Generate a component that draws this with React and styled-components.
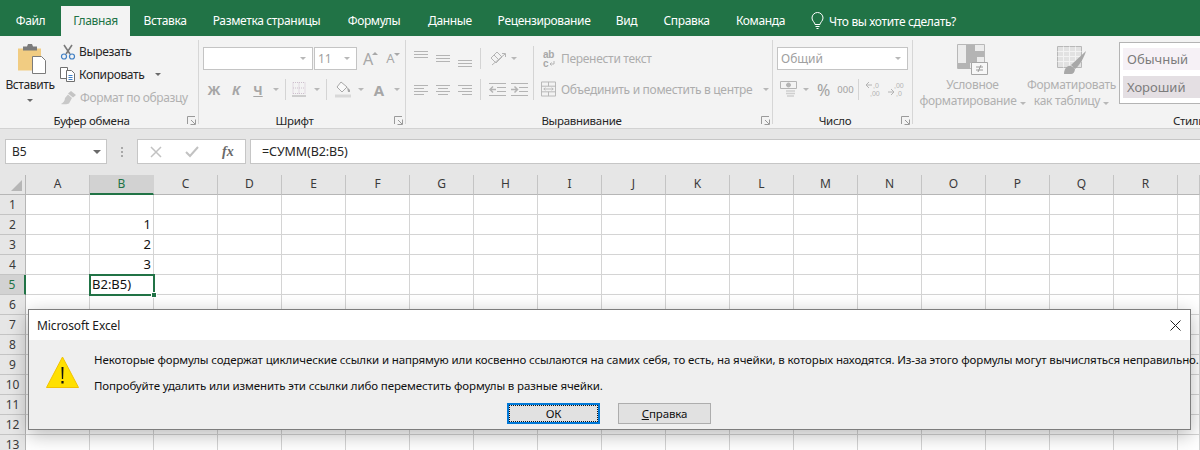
import React from 'react';
import styled, { createGlobalStyle } from 'styled-components';

const Global = createGlobalStyle`
    html, body {
        margin: 0;
        padding: 0;
        background: #fff;
    }
    body {
        font-family: "Noto Sans", "Open Sans", sans-serif;
        font-size: 12px;
        color: #262626;
    }
`
const Page = styled.div`
    width: 1200px;
    height: 450px;
    position: relative;
    overflow: hidden;
    display: flex;
    flex-direction: column;
`
const TabBar = styled.div`
    height: 36px;
    flex: none;
    display: flex;
    align-items: flex-end;
    background: #217346;
`
const Tab = styled.div`
    width: ${p => p.$w}px;
    height: ${p => p.$active ? 30 : 36}px;
    line-height: ${p => p.$active ? 30 : 42}px;
    text-align: center;
    font-size: 12px;
    letter-spacing: -0.35px;
    color: ${p => p.$active ? '#217346' : '#fff'};
    background: ${p => p.$active ? '#f3f3f3' : 'transparent'};
`
const Search = styled.div`
    display: flex;
    align-items: center;
    gap: 5px;
    height: 36px;
    padding: 6px 0 0 13px;
    box-sizing: border-box;
    color: #fff;
    font-size: 12px;
    letter-spacing: -0.35px;
`
const Ribbon = styled.div`
    height: 92px;
    flex: none;
    display: flex;
    background: #f3f3f3;
    border-bottom: 1px solid #d2d2d2;
`
const Group = styled.div`
    width: ${p => p.$w}px;
    flex: none;
    margin-top: 4px;
    box-sizing: border-box;
    background: linear-gradient(#d6d6d6, #d6d6d6) right top / 1px calc(100% - 4px) no-repeat;
    display: flex;
    flex-direction: column;
`
const GroupBody = styled.div`
    flex: 1;
    display: flex;
    min-height: 0;
`
const GroupLabel = styled.div`
    height: 16px;
    flex: none;
    display: flex;
    align-items: center;
    font-size: 11.5px;
    letter-spacing: -0.3px;
    color: #262626;
`
const LabelText = styled.span`
    flex: 1;
    text-align: center;
    white-space: nowrap;
`
const Launcher = styled.svg`
    flex: none;
    margin: 0 3px 0 4px;
    width: 9px;
    height: 9px;
`
const PasteCol = styled.div`
    width: 60px;
    flex: none;
    display: flex;
    flex-direction: column;
    align-items: center;
    padding-top: 3px;
    line-height: 16px;
    letter-spacing: -0.4px;
`
const PasteIconWrap = styled.div`
    height: 31px;
    margin-left: 3px;
`
const PasteLabel = styled.div`
    margin-top: 3px;
`
const ClipList = styled.div`
    display: flex;
    flex-direction: column;
`
const ClipRow = styled.div`
    height: 23px;
    display: flex;
    align-items: center;
    gap: 3px;
    letter-spacing: -0.35px;
    white-space: nowrap;
    color: ${p => p.$off ? '#b1b1b1' : '#262626'};
`
const Caret = styled.span`
    display: inline-block;
    flex: none;
    width: 0;
    height: 0;
    margin-left: ${p => p.$ml || 0}px;
    margin-top: ${p => p.$mt || 0}px;
    border-left: 3px solid transparent;
    border-right: 3px solid transparent;
    border-top: 3px solid ${p => p.$dark ? '#6a6a6a' : '#b8b8b8'};
`
const NameCaret = styled(Caret)`
    border-left-width: 4px;
    border-right-width: 4px;
    border-top-width: 4px;
`
const Stack = styled.div`
    display: flex;
    flex-direction: column;
    padding: 7px 0 0 4px;
    gap: 8px;
`
const Row = styled.div`
    display: flex;
    align-items: center;
    height: 23px;
`
const Combo = styled.div`
    width: ${p => p.$w}px;
    height: 23px;
    box-sizing: border-box;
    border: 1px solid #c4c4c4;
    background: #fff;
    display: flex;
    align-items: center;
    justify-content: space-between;
    padding: 0 6px 0 3px;
    margin-right: ${p => p.$mr || 0}px;
    color: #a0a0a0;
    font-size: 12px;
`
const GrowA = styled.span`
    font-size: ${p => p.$s}px;
    color: #a8a8a8;
    margin-left: ${p => p.$ml}px;
    line-height: 1;
    position: relative;
    &::after {
        content: '';
        position: absolute;
        top: 1px;
        right: -5px;
        border-left: 3px solid transparent;
        border-right: 3px solid transparent;
        ${p => p.$down ? 'border-top' : 'border-bottom'}: 3px solid #a8a8a8;
    }
`
const FontBtn = styled.span`
    width: ${p => p.$w || 22}px;
    text-align: center;
    font-weight: 700;
    font-size: ${p => p.$fs || 13}px;
    color: #a6a6a6;
    font-style: ${p => p.$i ? 'italic' : 'normal'};
    text-decoration: ${p => p.$u ? 'underline' : 'none'};
`
const VLine = styled.span`
    width: 1px;
    height: 21px;
    flex: none;
    background: #d4d4d4;
    margin-left: ${p => p.$m || 6}px;
    margin-right: ${p => p.$mr || p.$m || 6}px;
`
const Gap = styled.span`
    width: ${p => p.$w}px;
    flex: none;
`
const AlignCols = styled.div`
    display: flex;
    flex-direction: column;
    width: 127px;
    padding: 8px 0 0 8px;
    flex: none;
    box-sizing: border-box;
`
const AlignRow = styled.div`
    height: 21px;
    display: flex;
    align-items: center;
    margin-bottom: ${p => p.$mb || 0}px;
`
const WrapCol = styled.div`
    border-left: 1px solid #d4d4d4;
    margin: 6px 0 12px;
    padding: 2px 0 0 7px;
    display: flex;
    flex-direction: column;
    gap: 9px;
`
const WrapRow = styled.div`
    height: 22px;
    display: flex;
    align-items: center;
    gap: 5px;
    color: #adadad;
    letter-spacing: -0.3px;
    white-space: nowrap;
`
const Pct = styled.span`
    font-size: 16px;
    color: #a2a2a2;
    margin-left: 8px;
`
const Thousand = styled.span`
    font-size: 9.5px;
    color: #a2a2a2;
    margin-left: 7px;
`
const BigBtn = styled.div`
    width: ${p => p.$w}px;
    flex: none;
    display: flex;
    flex-direction: column;
    align-items: center;
    padding-top: ${p => p.$top}px;
    line-height: 16px;
    color: #b0b0b0;
    letter-spacing: -0.3px;
`
const BigIcon = styled.div`
    height: ${p => p.$h}px;
    flex: none;
`
const BigText = styled.div`
    text-align: center;
    white-space: nowrap;
`
const StyleBox = styled.div`
    width: 120px;
    height: 62px;
    flex: none;
    margin: 2px 0 0 8px;
    box-sizing: border-box;
    border: 1px solid #b4b4b4;
    background: #fff;
    padding: 5px 0 0 3px;
    display: flex;
    flex-direction: column;
    gap: 6px;
`
const StyleCell = styled.div`
    height: 22px;
    line-height: 22px;
    padding-left: 4px;
    font-size: 13px;
    color: #7c7c7c;
    background: ${p => p.$bg};
`
const FormulaBand = styled.div`
    height: 46px;
    flex: none;
    box-sizing: border-box;
    padding: 10px 0 11px 5px;
    background: #e6e6e6;
    display: flex;
    align-items: stretch;
`
const NameBox = styled.div`
    width: 102px;
    box-sizing: border-box;
    background: #fff;
    border: 1px solid #c6c6c6;
    display: flex;
    align-items: center;
    justify-content: space-between;
    padding: 0 5px 0 6px;
    font-size: 12px;
`
const Grip = styled.div`
    width: 30px;
    display: flex;
    flex-direction: column;
    align-items: center;
    justify-content: center;
    gap: 2px;
    span {
        width: 2px;
        height: 2px;
        background: #a8a8a8;
    }
`
const FxBox = styled.div`
    width: 109px;
    box-sizing: border-box;
    background: #fff;
    border: 1px solid #c6c6c6;
    display: flex;
    align-items: center;
    padding-left: 12px;
    gap: 23px;
    margin-right: 4px;
`
const Fx = styled.i`
    font-family: "Liberation Serif", serif;
    font-size: 14px;
    font-weight: 700;
    color: #6a6a6a;
`
const FormulaInput = styled.div`
    flex: 1;
    background: #fff;
    border: 1px solid #c6c6c6;
    border-right: 0;
    line-height: 23px;
    padding-left: 11px;
    font-size: 12.5px;
    letter-spacing: -0.1px;
`
const Sheet = styled.div`
    flex: 1;
    display: grid;
    grid-template-columns: 26px repeat(18, 64px) 1fr;
    grid-template-rows: 20px;
    grid-auto-rows: 20px;
    background: #fff;
`
const Corner = styled.div`
    background: #e6e6e6;
    border-right: 1px solid #b6b6b6;
    border-bottom: 1px solid #b6b6b6;
    box-sizing: border-box;
    position: relative;
    &::after {
        content: '';
        position: absolute;
        right: 3px;
        bottom: 3px;
        border-left: 11px solid transparent;
        border-bottom: 11px solid #b6b6b6;
    }
`
const ColHead = styled.div`
    box-sizing: border-box;
    text-align: center;
    line-height: 18px;
    font-size: 12px;
    background: ${p => p.$sel ? '#d2d2d2' : '#e6e6e6'};
    color: ${p => p.$sel ? '#217346' : '#3a3a3a'};
    border-right: 1px solid ${p => p.$sel ? '#d2d2d2' : '#c4c4c4'};
    border-bottom: ${p => p.$sel ? '2px solid #217346' : '1px solid #b6b6b6'};
`
const RowHead = styled.div`
    box-sizing: border-box;
    text-align: center;
    line-height: 19px;
    font-size: 12px;
    background: ${p => p.$sel ? '#d2d2d2' : '#e6e6e6'};
    color: ${p => p.$sel ? '#217346' : '#3a3a3a'};
    border-right: ${p => p.$sel ? '2px solid #217346' : '1px solid #b6b6b6'};
    border-bottom: 1px solid #c4c4c4;
`
const Cell = styled.div`
    box-sizing: border-box;
    border-right: 1px solid #d4d4d4;
    border-bottom: 1px solid #d4d4d4;
    line-height: 19px;
    font-size: 13px;
    padding: 0 2px;
    text-align: right;
    color: #111;
`
const ActiveCell = styled(Cell)`
    position: relative;
    z-index: 1;
    text-align: left;
    border: 0;
    outline: 2px solid #217346;
    outline-offset: -1px;
    padding-left: 2px;
    white-space: nowrap;
    &::after {
        content: '';
        position: absolute;
        right: -3px;
        bottom: -3px;
        width: 6px;
        height: 6px;
        background: #217346;
        border: 1px solid #fff;
        box-sizing: border-box;
    }
`
const Dialog = styled.div`
    position: absolute;
    z-index: 2;
    left: 28px;
    top: 309px;
    width: 1163px;
    height: 121px;
    box-sizing: border-box;
    border: 1px solid #7d7d7d;
    background: #efefef;
    box-shadow: 0 5px 18px rgba(0, 0, 0, 0.28);
    display: flex;
    flex-direction: column;
`
const DialogTitle = styled.div`
    height: 30px;
    flex: none;
    background: #fff;
    display: flex;
    align-items: center;
    justify-content: space-between;
    padding: 0 9px 0 8px;
    font-size: 12px;
    letter-spacing: -0.1px;
    color: #1a1a1a;
`
const DialogBody = styled.div`
    flex: 1;
    display: flex;
    padding: 12px 0 0 17px;
    gap: 15px;
`
const WarnWrap = styled.div`
    flex: none;
    margin-top: 4px;
`
const DialogText = styled.div`
    flex: none;
    display: flex;
    flex-direction: column;
    gap: 10px;
    line-height: 16px;
    font-size: 11.5px;
    letter-spacing: -0.12px;
    color: #111;
    white-space: nowrap;
`
const DialogButtons = styled.div`
    display: flex;
    gap: 18px;
    margin: -1px 0 0 413px;
`
const DialogButton = styled.div`
    width: 93px;
    height: 21px;
    box-sizing: border-box;
    text-align: center;
    font-size: 11.5px;
    background: #e1e1e1;
    border: ${p => p.$primary ? '2px solid #0078d7' : '1px solid #adadad'};
    line-height: ${p => p.$primary ? 17 : 19}px;
    outline: ${p => p.$primary ? '1px dotted #111' : 'none'};
    outline-offset: -3px;
    color: #111;
`

const tabs = [
    ['Файл', 61], ['Главная', 69, true], ['Вставка', 70], ['Разметка страницы', 133],
    ['Формулы', 82], ['Данные', 70], ['Рецензирование', 118], ['Вид', 47],
    ['Справка', 73], ['Команда', 75],
];
const columns = 'ABCDEFGHIJKLMNOPQR'.split('');
const values = { 2: '1', 3: '2', 4: '3' };
const gray = '#b4b4b4';

const LauncherIcon = () => (
    <Launcher viewBox="0 0 9 9" fill="none" stroke="#9a9a9a">
        <path d="M.5 8V.5H8M8.5 3.5v5h-5M4 4l4 4" />
    </Launcher>
);
const Bulb = () => (
    <svg width="13" height="18" viewBox="0 0 13 18" fill="none" stroke="#fff">
        <path d="M4 12.5c0-2-3-3.500-3-6.500a5.500 5.500 0 0 1 11 0c0 3-3 4.500-3 6.500zM4.500 14.500h4M5.500 16.500h2" />
    </svg>
);
const PasteIcon = () => (
    <svg width="30" height="31" viewBox="0 0 30 31">
        <path d="M1 5.500h23v22H1z" fill="#f1cc82" />
        <path d="M6 3.500h4l1-2.500h4l1 2.500h4v4H6z" fill="#7b7b7b" />
        <path d="M15.500 13.500h9l4 4v13h-13z" fill="#fff" stroke="#7b7b7b" />
    </svg>
);
const ScissorsIcon = () => (
    <svg width="16" height="16" viewBox="0 0 16 16" fill="none">
        <path d="M4 1l6 9M12 1L6 10" stroke="#7a7a7a" strokeWidth="1.600" />
        <circle cx="4" cy="12.500" r="2.500" stroke="#3f7fc4" strokeWidth="1.200" />
        <circle cx="12" cy="12.500" r="2.500" stroke="#3f7fc4" strokeWidth="1.200" />
    </svg>
);
const CopyIcon = () => (
    <svg width="16" height="15" viewBox="0 0 16 15" fill="none" stroke="#6f6f6f">
        <path d="M.5.500h7v11h-7z" fill="#fff" />
        <path d="M6.500 3.500h5l3 3v8h-8z" fill="#fff" />
        <path d="M8.500 8.500h4M8.500 10.500h4M8.500 12.500h4" stroke="#3f7fc4" />
    </svg>
);
const PainterIcon = () => (
    <svg width="17" height="15" viewBox="0 0 17 15">
        <path d="M11 1l5 4-3 2.500-5-4z" fill="#c4c4c4" />
        <path d="M8 4.500l4 3.500-3 5.500c-3 1-7 1-8 .5 2-1 4-3 4-6z" fill="#c8c8c8" />
    </svg>
);
const BorderIcon = () => (
    <svg width="14" height="15" viewBox="0 0 14 15" fill="none">
        <path d="M1 .5v11M7 .5v11M13 .5v11M1 .5h12M1 6h12M1 11.500h12" stroke="#cdbfcd" strokeDasharray="1 1" />
        <path d="M0 14h14" stroke="#a8a8a8" />
    </svg>
);
const FillIcon = () => (
    <svg width="17" height="17" viewBox="0 0 17 17" fill="none">
        <path d="M6 1l6 5-5 5-5-5z" stroke="#a8a8a8" fill="#fafafa" />
        <path d="M12 6l3 3v2h-2z" fill="#a8a8a8" />
        <path d="M0 15h16" stroke="#d8d8d8" strokeWidth="3" />
    </svg>
);
// horizontal lines for the align buttons
const AlignIcon = ({ v, h }) => {
    const widths = [14, 10, 14, 10];
    const top = v === 'top' ? 0 : v === 'mid' ? 4 : 9;
    return (
        <svg width="14" height="16" viewBox="0 0 14 16" fill="none" stroke={gray}>
            {v
                ? [0, 3, 6].map(y => <path key={y} d={`M0 ${top + y + .5}h14`} />)
                : widths.map((w, i) => {
                    const x = h === 'left' ? 0 : h === 'center' ? (14 - w) / 2 : 14 - w;
                    return <path key={i} d={`M${x} ${i * 3 + 3.500}h${w}`} />;
                })}
        </svg>
    );
};
const OrientIcon = () => (
    <svg width="18" height="17" viewBox="0 0 18 17" fill="none" stroke={gray}>
        <path d="M2 8l6-6 5 5-6 6zM5 5l5 5" />
        <path d="M3 15L16 4M13 3.500h3.500V7" />
    </svg>
);
const IndentIcon = ({ right }) => (
    <svg width="17" height="13" viewBox="0 0 17 13" fill="none" stroke={gray}>
        <path d="M0 .5h17M8 4.500h9M8 8.500h9M0 12.500h17" />
        <path d={right ? 'M0 6.500h6M3.500 3.500l3 3-3 3' : 'M1 6.500h6M4 3.500l-3 3 3 3'} strokeWidth="1.500" />
    </svg>
);
const WrapIcon = () => (
    <svg width="15" height="18" viewBox="0 0 15 18" fontFamily="Liberation Sans" fontSize="10" fontWeight="700" fill="#a8a8a8">
        <text x="2" y="8">ab</text>
        <text x="2" y="16.500">c</text>
        <path d="M13 11v3H9M10.500 12.500L9 14l1.500 1.500" fill="none" stroke={gray} />
    </svg>
);
const MergeIcon = () => (
    <svg width="15" height="16" viewBox="0 0 16 16" fill="none" stroke={gray}>
        <path d="M.5.500h15v15H.5zM.5 5h15M.5 11h15M8 .5V5M8 11v4.500" />
        <path d="M3 8h10M4.500 6.500L3 8l1.500 1.500M11.500 6.500L13 8l-1.500 1.500" />
    </svg>
);
const MoneyIcon = () => (
    <svg width="18" height="17" viewBox="0 0 18 17" fill="none" stroke={gray}>
        <path d="M.5.500h16v7H.5z" />
        <circle cx="8.500" cy="4" r="2" fill={gray} />
        <path d="M6 10h9M6 12.500h9M7 15h7" strokeWidth="1.500" stroke="#cfcfcf" />
    </svg>
);
const DecIcon = ({ up }) => (
    <svg width="20" height="17" viewBox="0 0 20 17" fill={gray} fontFamily="Liberation Sans" fontSize="7">
        {up ? (
            <>
                <text x="9" y="7">,00</text>
                <text x="11" y="15">,0</text>
                <path d="M3 11h6M6 8l3 3-3 3" fill="none" stroke={gray} />
            </>
        ) : (
            <>
                <text x="10" y="7">,0</text>
                <text x="7" y="15">,00</text>
                <path d="M3 4h6M6 1L3 4l3 3" fill="none" stroke={gray} />
            </>
        )}
    </svg>
);
const CondIcon = () => (
    <svg width="31" height="31" viewBox="0 0 31 31" fill="none">
        <path d="M.5.500h27v24H.5z" fill="#ececec" stroke="#b8b8b8" />
        <path d="M9 1h9v6H9zM9 7h18v6H9zM9 13h11v6H9zM1 19h12v6H1z" fill="#b4b4b4" />
        <path d="M14.500 18.500h16v12h-16z" fill="#f7f7f7" stroke="#a6a6a6" />
        <path d="M19 23h7M19 26h7M24 21l-3 7" stroke="#9a9a9a" />
    </svg>
);
const TableIcon = () => (
    <svg width="30" height="29" viewBox="0 0 30 29" fill="none">
        <path d="M.5.500h24v21H.5z" fill="#e2e2e2" stroke="#b8b8b8" />
        <path d="M.5 5.500h24M.5 10.500h24M.5 15.500h24M6.500.500v21M12.500.500v21M18.500.500v21" stroke="#f3f3f3" />
        <path d="M29 5L14 19l4 4c4-3 9-11 11-18z" fill="#a8a8a8" />
        <path d="M7 28c0-5 3-9 7-8l4 3c0 3-2 5-4 5z" fill="#a8a8a8" />
    </svg>
);
const WarnIcon = () => (
    <svg width="33" height="32" viewBox="0 0 33 32">
        <path d="M16.500 1L32.500 31.500H.5z" fill="#ffe000" stroke="#f2c200" />
        <path d="M15.500 11h2l-.4 12h-1.200zM15.400 25h2.200v2.500h-2.200z" fill="#111" />
    </svg>
);

const App = () => {
    const rows = Array.from({ length: 13 }, (_, i) => i + 1);
    return (
        <Page>
            <Global />
            <TabBar>
                {tabs.map(([name, w, active]) => (
                    <Tab key={name} $w={w} $active={active}>{name}</Tab>
                ))}
                <Search><Bulb />Что вы хотите сделать?</Search>
            </TabBar>
            <Ribbon>
                <Group $w={199}>
                    <GroupBody>
                        <PasteCol>
                            <PasteIconWrap><PasteIcon /></PasteIconWrap>
                            <PasteLabel>Вставить</PasteLabel>
                            <Caret $dark $mt={6} />
                        </PasteCol>
                        <ClipList>
                            <ClipRow><ScissorsIcon />Вырезать</ClipRow>
                            <ClipRow><CopyIcon />Копировать<Caret $dark $ml={8} /></ClipRow>
                            <ClipRow $off><PainterIcon />Формат по образцу</ClipRow>
                        </ClipList>
                    </GroupBody>
                    <GroupLabel><LabelText>Буфер обмена</LabelText><LauncherIcon /></GroupLabel>
                </Group>
                <Group $w={207}>
                    <GroupBody>
                        <Stack>
                            <Row>
                                <Combo $w={110} $mr={1}><span /><Caret /></Combo>
                                <Combo $w={43}>11<Caret /></Combo>
                                <GrowA $s={16} $ml={6}>A</GrowA>
                                <GrowA $s={13} $ml={13} $down>A</GrowA>
                            </Row>
                            <Row>
                                <FontBtn>Ж</FontBtn>
                                <FontBtn $i>К</FontBtn>
                                <FontBtn $u>Ч</FontBtn>
                                <Caret $ml={4} />
                                <VLine />
                                <BorderIcon />
                                <Caret $ml={8} />
                                <VLine $mr={8} />
                                <FillIcon />
                                <Caret $ml={6} />
                                <FontBtn $w={30} $fs={15}>A</FontBtn>
                                <Caret />
                            </Row>
                        </Stack>
                    </GroupBody>
                    <GroupLabel><LabelText>Шрифт</LabelText><LauncherIcon /></GroupLabel>
                </Group>
                <Group $w={367}>
                    <GroupBody>
                        <AlignCols>
                            <AlignRow $mb={10}>
                                <AlignIcon v="top" /><Gap $w={8} />
                                <AlignIcon v="mid" /><Gap $w={8} />
                                <AlignIcon v="bot" />
                                <VLine $m={8} />
                                <OrientIcon /><Caret $ml={4} />
                            </AlignRow>
                            <AlignRow>
                                <AlignIcon h="left" /><Gap $w={8} />
                                <AlignIcon h="center" /><Gap $w={8} />
                                <AlignIcon h="right" />
                                <VLine $m={8} />
                                <IndentIcon /><Gap $w={5} />
                                <IndentIcon right />
                            </AlignRow>
                        </AlignCols>
                        <WrapCol>
                            <WrapRow><WrapIcon />Перенести текст</WrapRow>
                            <WrapRow><MergeIcon />Объединить и поместить в центре<Caret $ml={6} /></WrapRow>
                        </WrapCol>
                    </GroupBody>
                    <GroupLabel><LabelText>Выравнивание</LabelText><LauncherIcon /></GroupLabel>
                </Group>
                <Group $w={140}>
                    <GroupBody>
                        <Stack>
                            <Combo $w={131}>Общий<Caret /></Combo>
                            <Row>
                                <Gap $w={3} />
                                <MoneyIcon /><Caret $ml={5} />
                                <Pct>%</Pct>
                                <Thousand>000</Thousand>
                                <VLine $m={4} />
                                <DecIcon />
                                <Gap $w={2} />
                                <DecIcon up />
                            </Row>
                        </Stack>
                    </GroupBody>
                    <GroupLabel><LabelText>Число</LabelText><LauncherIcon /></GroupLabel>
                </Group>
                <Group $w={552}>
                    <GroupBody>
                        <BigBtn $w={119} $top={4}>
                            <BigIcon $h={33}><CondIcon /></BigIcon>
                            <BigText>Условное<br />форматирование<Caret $ml={3} /></BigText>
                        </BigBtn>
                        <BigBtn $w={79} $top={6}>
                            <BigIcon $h={31}><TableIcon /></BigIcon>
                            <BigText>Форматировать<br />как таблицу<Caret $ml={3} /></BigText>
                        </BigBtn>
                        <StyleBox>
                            <StyleCell $bg="#f6f1f6">Обычный</StyleCell>
                            <StyleCell $bg="#e4dfe3">Хороший</StyleCell>
                        </StyleBox>
                    </GroupBody>
                    <GroupLabel><LabelText>Стили</LabelText></GroupLabel>
                </Group>
            </Ribbon>
            <FormulaBand>
                <NameBox>B5<NameCaret $dark /></NameBox>
                <Grip><span /><span /><span /></Grip>
                <FxBox>
                    <svg width="12" height="12" viewBox="0 0 12 12" stroke="#c2c2c2" strokeWidth="1.500"><path d="M1 1l10 10M11 1L1 11" /></svg>
                    <svg width="14" height="12" viewBox="0 0 14 12" fill="none" stroke="#c2c2c2" strokeWidth="2"><path d="M1 6l4 4 8-9" /></svg>
                    <Fx>fx</Fx>
                </FxBox>
                <FormulaInput>=СУММ(B2:B5)</FormulaInput>
            </FormulaBand>
            <Sheet>
                <Corner />
                {columns.map(c => <ColHead key={c} $sel={c === 'B'}>{c}</ColHead>)}
                <ColHead />
                {rows.map(r => (
                    <React.Fragment key={r}>
                        <RowHead $sel={r === 5}>{r}</RowHead>
                        {columns.map(c => (
                            c === 'B' && r === 5
                                ? <ActiveCell key={c}>B2:B5)</ActiveCell>
                                : <Cell key={c}>{c === 'B' ? values[r] : ''}</Cell>
                        ))}
                        <Cell />
                    </React.Fragment>
                ))}
            </Sheet>
            <Dialog>
                <DialogTitle>
                    Microsoft Excel
                    <svg width="11" height="11" viewBox="0 0 11 11" stroke="#222"><path d="M.5.500l10 10M10.500.500l-10 10" /></svg>
                </DialogTitle>
                <DialogBody>
                    <WarnWrap><WarnIcon /></WarnWrap>
                    <DialogText>
                        <div>Некоторые формулы содержат циклические ссылки и напрямую или косвенно ссылаются на самих себя, то есть, на ячейки, в которых находятся. Из-за этого формулы могут вычисляться неправильно.</div>
                        <div>Попробуйте удалить или изменить эти ссылки либо переместить формулы в разные ячейки.</div>
                        <DialogButtons>
                            <DialogButton $primary>ОК</DialogButton>
                            <DialogButton><u>С</u>правка</DialogButton>
                        </DialogButtons>
                    </DialogText>
                </DialogBody>
            </Dialog>
        </Page>
    );
};

export default App;
